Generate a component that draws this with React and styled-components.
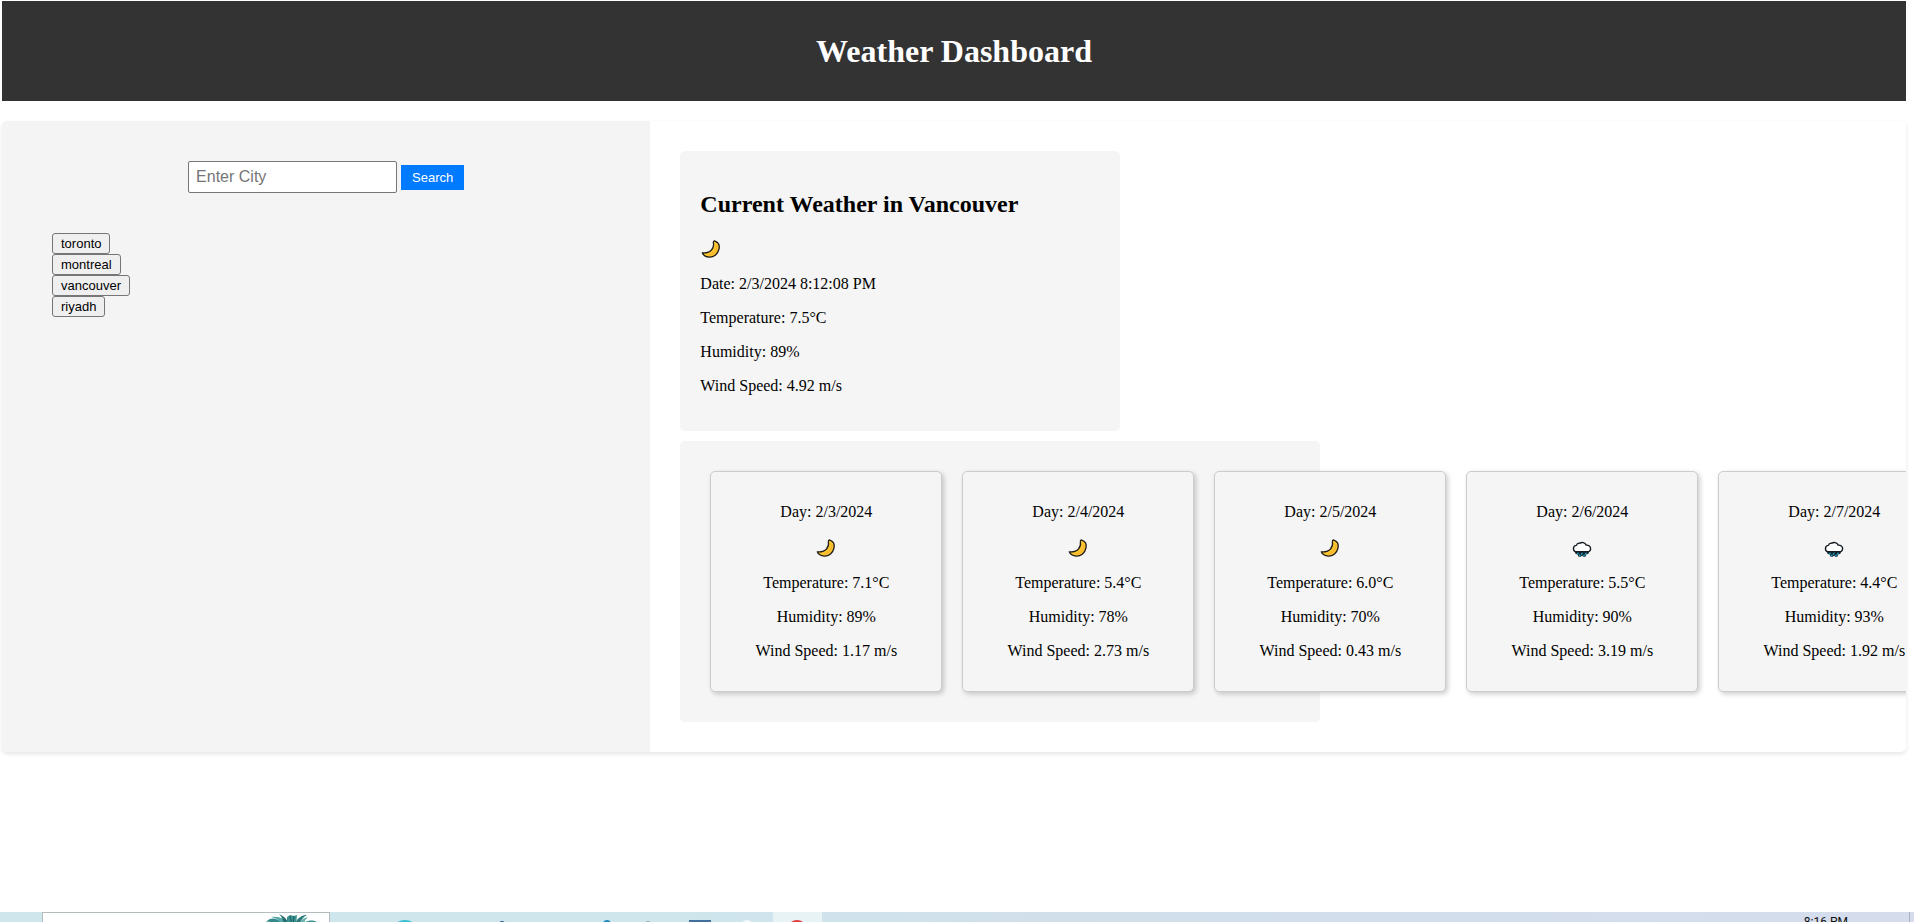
import React, { useState } from "react";
import styled, { createGlobalStyle } from "styled-components";

const GlobalStyle = createGlobalStyle`
  *, *::before, *::after { box-sizing: border-box; }
  body {
    margin: 0;
    background: #fff;
    color: #000;
    font-family: "Liberation Serif", "Times New Roman", serif;
    font-size: 16px;
    line-height: 18px;
  }
`;

const Page = styled.div`
  display: flex;
  flex-direction: column;
  min-height: 100vh;
  overflow: hidden;
`;

const Header = styled.header`
  margin: 1px 8px 20px 2px;
  padding: 32px 10px;
  background: #333;
  color: #fff;
  text-align: center;
`;

const Title = styled.h1`
  margin: 0;
  font-size: 32px;
  line-height: 36px;
`;

const Dashboard = styled.main`
  display: flex;
  margin: 0 8px 20px 2px;
  border-radius: 5px;
  box-shadow: 0 2px 4px rgba(0, 0, 0, 0.1);
  overflow: hidden;
`;

const Sidebar = styled.aside`
  flex: 0 0 calc(34% + 1px);
  padding: 40px 50px;
  background: #f4f4f4;
`;

const SearchForm = styled.form`
  display: flex;
  align-items: center;
  justify-content: center;
  gap: 4px;
  margin-bottom: 40px;
`;

const CityInput = styled.input`
  width: 209px;
  height: 32px;
  padding: 0 7px;
  border: 1px solid #767676;
  border-radius: 2px;
  background: #fff;
  font: 16px "Liberation Sans", Arial, sans-serif;

  &::placeholder { color: #757575; }
`;

const SearchButton = styled.button`
  height: 25px;
  padding: 0 11px;
  border: 0;
  background: #007bff;
  color: #fff;
  font: 13px "Liberation Sans", Arial, sans-serif;
`;

const History = styled.ul`
  margin: 0;
  padding: 0;
  list-style: none;
`;

const HistoryItem = styled.li`
  display: flex;
`;

const HistoryButton = styled.button`
  height: 21px;
  padding: 0 8px;
  border: 1px solid #767676;
  border-radius: 3px;
  background: #efefef;
  color: #000;
  font: 13px "Liberation Sans", Arial, sans-serif;
`;

const Content = styled.div`
  flex: 1;
  min-width: 0;
  display: flex;
  flex-direction: column;
  gap: 10px;
  padding: 30px;
`;

const CurrentCard = styled.section`
  width: 440px;
  padding: 40px 20px 36px;
  border-radius: 5px;
  background: #f5f5f5;
`;

const CardTitle = styled.h2`
  margin: 0 0 20px;
  font-size: 24px;
  line-height: 27px;
`;

const Stack = styled.div`
  display: flex;
  flex-direction: column;
  align-items: ${(p) => (p.$centered ? "center" : "flex-start")};
  gap: 16px;
`;

const Line = styled.p`
  margin: 0;
  white-space: nowrap;
`;

const Icon = styled.svg`
  display: block;
  width: 22px;
  height: 21px;
`;

const Forecast = styled.section`
  display: flex;
  gap: 20px;
  width: 640px;
  padding: 30px;
  border-radius: 5px;
  background: #f5f5f5;
`;

const DayCard = styled.article`
  flex: 0 0 232px;
  padding: 31px 15px;
  border: 1px solid #ccc;
  border-radius: 5px;
  background: #f5f5f5;
  box-shadow: 2px 2px 5px rgba(0, 0, 0, 0.2);
`;

const Taskbar = styled.footer`
  display: flex;
  height: 10px;
  margin-top: auto;
  padding-left: 42px;
  background: linear-gradient(90deg, #cfe6ed 0%, #cfe6ed 35%, #d1dfeb 55%, #d5dded 100%);
  overflow: hidden;
`;

const TaskSearch = styled.div`
  display: flex;
  justify-content: flex-end;
  flex: 0 0 288px;
  height: 40px;
  margin-right: 51px;
  padding-right: 12px;
  border: 1px solid #b4bcbf;
  background: #fff;
`;

const TaskApp = styled.div`
  flex: 0 0 49px;
  height: 40px;
  background: ${(p) => (p.$active ? "#e8f3f6" : "transparent")};
`;

const Clock = styled.time`
  margin-left: auto;
  margin-right: 61px;
  padding-top: 2px;
  color: #111;
  font: 12px/16px Roboto, "Noto Sans", sans-serif;
`;

const ShowDesktop = styled.div`
  flex: 0 0 5px;
  border-left: 1px solid #a9b3c0;
`;

function MoonIcon() {
  return (
    <Icon viewBox="0 0 22 21" role="img" aria-label="Clear night">
      <path
        d="M14.3 2.8C18 4 19.9 7.2 19 11c-1.2 5.500-5.500 8.300-9.700 8.100-3.300-.2-6-1.800-7-4.300 4.200.4 7.200-.5 9.200-2.800 1.800-2.200 2.400-4.700 1.900-6.800-.2-1.200.2-2 .9-2.400z"
        fill="#fcc630"
        stroke="#211d19"
        strokeWidth="1.3"
        strokeLinejoin="round"
      />
      <path d="M16.900 7.500c.3 5-3.300 9-8.400 9.600" fill="none" stroke="#f5b12f" strokeWidth="1.2" />
    </Icon>
  );
}

function RainIcon() {
  return (
    <Icon viewBox="0 0 22 21" role="img" aria-label="Rain">
      <path
        d="M4 14.200h14.200l-.8 2.600-2.200.6-.8 2.300h-2.100l-1.300-1.200-1.200 1.200H7.600l-1-2.300-2.200-.6z"
        fill="#10262f"
      />
      <path
        d="M4.500 14.800C2.900 14.200 2.300 12.800 2.500 11.200c.2-1.700 1.300-2.700 2.900-2.800C5.900 6.600 7.400 5.900 8.800 6.200c1.900-1.300 5.200-.9 6.400 1.900 2.500-.2 4.500 1.300 4.400 3.500 0 1.600-.8 2.800-2.200 3.200z"
        fill="#fff"
        stroke="#151b20"
        strokeWidth="1.400"
        strokeLinejoin="round"
      />
      <path
        d="M7 16.200l-.4.800M11 16.200l-.4.800M15 16.200l-.4.800M9 18l-.4.700M13.200 18l-.4.700"
        stroke="#2ba5cd"
        strokeWidth="1.400"
        strokeLinecap="round"
      />
    </Icon>
  );
}

const ICONS = { moon: MoonIcon, rain: RainIcon };

function Readings({ label, when, icon, temp, humidity, wind, centered }) {
  const WeatherIcon = ICONS[icon];
  const date = <Line>{label}: {when}</Line>;
  return (
    <Stack $centered={centered}>
      {centered && date}
      <WeatherIcon />
      {!centered && date}
      <Line>Temperature: {temp}°C</Line>
      <Line>Humidity: {humidity}%</Line>
      <Line>Wind Speed: {wind} m/s</Line>
    </Stack>
  );
}

const CITIES = ["toronto", "montreal", "vancouver", "riyadh"];

const DAYS = [
  { when: "2/3/2024", icon: "moon", temp: "7.1", humidity: 89, wind: "1.17" },
  { when: "2/4/2024", icon: "moon", temp: "5.4", humidity: 78, wind: "2.73" },
  { when: "2/5/2024", icon: "moon", temp: "6.0", humidity: 70, wind: "0.43" },
  { when: "2/6/2024", icon: "rain", temp: "5.5", humidity: 90, wind: "3.19" },
  { when: "2/7/2024", icon: "rain", temp: "4.4", humidity: 93, wind: "1.92" },
];

const APPS = [
  <ellipse cx="24" cy="16" rx="11" ry="8" fill="#35bfd0" />,
  null,
  <circle cx="23" cy="12" r="3" fill="#2a5a94" />,
  null,
  <circle cx="30" cy="12" r="4" fill="#2186bd" />,
  <circle cx="22" cy="12" r="3" fill="#9eb4bf" />,
  <rect x="14" y="8" width="22" height="12" fill="#426f9b" />,
  <circle cx="23" cy="15" r="7" fill="#f2f8fb" />,
  <circle cx="24" cy="18" r="10" fill="#e03c3c" />,
];

function Pineapple() {
  return (
    <svg width="54" height="12" viewBox="0 0 54 12" aria-hidden="true">
      <path d="M3 9C8 3 16 5 20 12H9C9 9 6 8 3 9z" fill="#35898b" />
      <path d="M8 4c8-1 15 2 17 8h-7C17 7 13 5 8 4z" fill="#57aaa7" />
      <path d="M16 1c5 2 9 6 10 11h-6C21 7 19 4 16 1z" fill="#276c70" />
      <path d="M24 4l3-2 4 1 3-1-1 10H24z" fill="#3a9391" />
      <path d="M27 3l2 9M31 3l-1 9" stroke="#1f5c63" strokeWidth="1" />
      <path d="M44 2c-6 0-11 4-12 10h5c0-4 3-8 7-10z" fill="#2d7b7d" />
      <path d="M45 4c-5 1-8 4-9 8h5c0-3 2-6 4-8z" fill="#69b3ad" />
      <path d="M54 9c-6-3-12-1-15 3h13c0-2 1-2 2-3z" fill="#3b9290" />
    </svg>
  );
}

export default function App() {
  const [city, setCity] = useState("");
  return (
    <>
      <GlobalStyle />
      <Page>
        <Header>
          <Title>Weather Dashboard</Title>
        </Header>
        <Dashboard>
          <Sidebar>
            <SearchForm onSubmit={(e) => e.preventDefault()}>
              <CityInput
                type="text"
                aria-label="Enter City"
                placeholder="Enter City"
                value={city}
                onChange={(e) => setCity(e.target.value)}
              />
              <SearchButton type="submit">Search</SearchButton>
            </SearchForm>
            <History>
              {CITIES.map((name) => (
                <HistoryItem key={name}>
                  <HistoryButton type="button" onClick={() => setCity(name)}>
                    {name}
                  </HistoryButton>
                </HistoryItem>
              ))}
            </History>
          </Sidebar>
          <Content>
            <CurrentCard>
              <CardTitle>Current Weather in Vancouver</CardTitle>
              <Readings
                label="Date"
                when="2/3/2024 8:12:08 PM"
                icon="moon"
                temp="7.5"
                humidity={89}
                wind="4.92"
              />
            </CurrentCard>
            <Forecast>
              {DAYS.map((day) => (
                <DayCard key={day.when}>
                  <Readings label="Day" centered {...day} />
                </DayCard>
              ))}
            </Forecast>
          </Content>
        </Dashboard>
        <Taskbar>
          <TaskSearch>
            <Pineapple />
          </TaskSearch>
          {APPS.map((art, i) => (
            <TaskApp key={i} $active={i === APPS.length - 1}>
              <svg width="49" height="40" viewBox="0 0 49 40" aria-hidden="true">
                {art}
              </svg>
            </TaskApp>
          ))}
          <Clock>8:16 PM</Clock>
          <ShowDesktop />
        </Taskbar>
      </Page>
    </>
  );
}
